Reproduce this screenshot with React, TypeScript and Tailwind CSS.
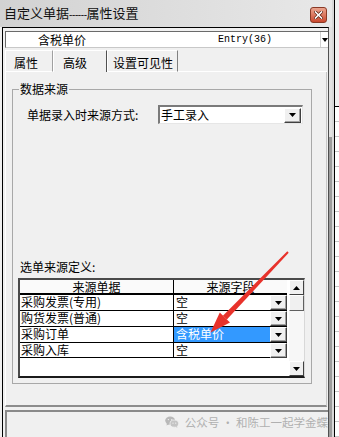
import React from "react";

const FONT = { fontFamily: '"Noto Sans CJK SC", "Noto Sans", sans-serif' };

function Tri({ w = 7, h = 4 }: { w?: number; h?: number }) {
  return (
    <svg width={w} height={h} viewBox={`0 0 ${w} ${h}`}>
      <polygon points={`0,0 ${w},0 ${w / 2},${h}`} fill="#000" />
    </svg>
  );
}

// raised button face, classic windows look
function DropBtn({ className = "" }: { className?: string }) {
  return (
    <div
      className={`flex items-center justify-center bg-[#f0f0f0] border border-t-white border-l-white border-r-[#404040] border-b-[#404040] shadow-[inset_-1px_-1px_0_#a0a0a0] ${className}`}
    >
      <Tri />
    </div>
  );
}

function UpTri() {
  return (
    <svg width="7" height="4" viewBox="0 0 7 4">
      <polygon points="0,4 7,4 3.5,0" fill="#000" />
    </svg>
  );
}

const rows = [
  { src: "采购发票(专用)", field: "空", h: "h-[16px]" },
  { src: "购货发票(普通)", field: "空", h: "h-[16px]" },
  { src: "采购订单", field: "含税单价", h: "h-[16px]", sel: true },
  { src: "采购入库", field: "空", h: "h-[15px]" },
];

function WeChat() {
  return (
    <svg width="14" height="12" viewBox="0 0 14 12">
      <ellipse cx="5.2" cy="4.6" rx="5" ry="4.2" fill="#b8b8b8" />
      <polygon points="2,7 1.5,9.5 4.5,8" fill="#b8b8b8" />
      <ellipse cx="9.3" cy="7.6" rx="4.3" ry="3.6" fill="#c4c4c4" stroke="#f0f0f0" strokeWidth="0.8" />
      <polygon points="11.5,10 12.6,11.8 10.2,10.8" fill="#c4c4c4" />
      <circle cx="3.4" cy="3.6" r="0.7" fill="#f0f0f0" />
      <circle cx="6.8" cy="3.6" r="0.7" fill="#f0f0f0" />
      <circle cx="8" cy="7.2" r="0.6" fill="#f0f0f0" />
      <circle cx="10.7" cy="7.2" r="0.6" fill="#f0f0f0" />
    </svg>
  );
}

export default function App() {
  return (
    <div className="relative w-[339px] h-[437px] overflow-hidden bg-[#f0f0f0] flex text-black" style={FONT}>
      {/* dialog */}
      <div className="w-[332px] flex flex-col">
        <div className="h-[27px] flex items-center justify-between pl-[4px] pr-[5px] bg-gradient-to-r from-[#d2d2d2] to-[#e8e8e8]">
          <span className="text-[13px] leading-[16px] text-[#111]">
            自定义单据
            <span className="text-[10px] tracking-[-0.4px]" style={{ fontFamily: '"Liberation Sans", sans-serif' }}>
              ------
            </span>
            属性设置
          </span>
          <div className="w-[17px] h-[16px] mt-[3px] rounded-[3px] border border-[#8a3a26] bg-gradient-to-b from-[#eba58f] to-[#c9472d] flex items-center justify-center">
            <svg width="9" height="8" viewBox="0 0 9 8">
              <path d="M1.5 1 L7.5 7 M7.5 1 L1.5 7" stroke="#5a2010" strokeWidth="3" strokeLinecap="square" />
              <path d="M1.5 1 L7.5 7 M7.5 1 L1.5 7" stroke="#fff" strokeWidth="1.6" strokeLinecap="square" />
            </svg>
          </div>
        </div>

        <div className="flex-1 flex">
          <div className="w-[2px]" />
          <div className="w-[327px] flex flex-col border-l border-t border-black border-r border-r-[#505050]">
            {/* field combo */}
            <div className="ml-[2px] mt-[3px] h-[17px] flex bg-white border-l border-t border-[#6a6a6a] border-b border-b-[#c8c8c8]">
              <span className="w-[212px] pl-[32px] text-[12px] leading-[15px]">含税单价</span>
              <span className="flex-1 text-[10px] leading-[15px]" style={{ fontFamily: '"Liberation Mono", monospace' }}>
                Entry(36)
              </span>
              <div className="w-[8px] flex items-center justify-center border-l border-[#d0d0d0]">
                <Tri w={6} h={4} />
              </div>
            </div>

            {/* tabs */}
            <div className="ml-[2px] mt-[2px] h-[22px] flex text-[12px]">
              <div className="w-[48px] h-[22px] pt-[3px] pl-[8px] leading-[17px] border-t border-l border-white border-r border-r-[#a0a0a0] border-b border-b-white">
                属性
              </div>
              <div className="w-[54px] h-[22px] pt-[3px] pl-[9px] leading-[18px] border-t border-l border-white border-r border-r-[#505050]">
                高级
              </div>
              <div className="w-[71px] h-[22px] pt-[3px] pl-[5px] leading-[17px] border-t border-l border-white border-r border-r-[#808080] border-b border-b-white">
                设置可见性
              </div>
              <div className="flex-1 border-b border-white mr-[1px]" />
            </div>

            {/* tab panel */}
            <div className="ml-[2px] mr-[1px] h-[335px] flex flex-col border-l border-white border-r border-r-[#c8c8c8] border-b-2 border-b-[#8c8c8c]">
              <fieldset className="mt-[11px] ml-[6px] w-[300px] border border-[#a8a8a8] px-0 pb-[5px] text-[12px]">
                <legend className="ml-[6px] px-[1px] leading-[12px]">数据来源</legend>
                <div className="mt-[10px] h-[19px] flex items-center">
                  <span className="ml-[14px] w-[131px] leading-[14px]">单据录入时来源方式:</span>
                  <div className="w-[145px] h-[19px] flex items-center bg-white border-l-2 border-t-2 border-[#7a7a7a] border-r border-b border-r-[#e6e6e6] border-b-[#e6e6e6]">
                    <span className="flex-1 pl-[1px] leading-[14px]">手工录入</span>
                    <DropBtn className="w-[17px] h-[15px] mr-px" />
                  </div>
                </div>

                <div className="mt-[136px] ml-[7px] leading-[14px]">选单来源定义:</div>

                {/* grid */}
                <div className="mt-[4px] ml-[5px] w-[287px] h-[100px] flex bg-white border-l-2 border-t-2 border-[#4a4a4a] border-b-2 border-b-[#1a1a1a] border-r border-r-[#d8d8d8]">
                  <div className="w-[267px] flex flex-col">
                    <div className="h-[15px] flex border-b-2 border-black bg-[#fafafa] leading-[13px]">
                      <div className="w-[154px] text-center border-r border-black">来源单据</div>
                      <div className="flex-1 text-center">来源字段</div>
                    </div>
                    {rows.map((r) => (
                      <div key={r.src} className={`${r.h} flex border-b border-black leading-[14px]`}>
                        <div className="w-[154px] pl-[1px] border-r border-black whitespace-nowrap">{r.src}</div>
                        <div className="flex-1 flex">
                          <div className={`flex-1 pl-[2px] ${r.sel ? "bg-[#3399ff] text-white" : ""}`}>{r.field}</div>
                          <DropBtn className="w-[17px] h-[15px]" />
                        </div>
                      </div>
                    ))}
                  </div>
                  <div className="ml-[2px] w-[15px] flex flex-col">
                    <div className="h-[15px] flex items-center justify-center bg-[#f0f0f0] border border-t-white border-l-white border-r-[#404040] border-b-[#404040]">
                      <UpTri />
                    </div>
                    <div className="h-[16px] bg-[#f0f0f0] border border-t-white border-l-white border-r-[#606060] border-b-[#606060]" />
                    <div className="flex-1 bg-[#f7f7f7]" />
                    <div className="h-[15px] flex items-center justify-center bg-[#f0f0f0] border border-t-white border-l-white border-r-[#404040] border-b-[#404040]">
                      <Tri />
                    </div>
                  </div>
                </div>
              </fieldset>
            </div>

            {/* status area */}
            <div className="mt-[3px] ml-[2px] flex-1 border-t-2 border-l-2 border-[#8a8a8a] flex justify-end items-start pt-[3px]">
              <div className="flex items-center gap-[6px] text-[11.5px] leading-[14px] text-[#b0b0b0] whitespace-nowrap">
                <WeChat />
                <span>公众号 · 和陈工一起学金蝶</span>
              </div>
            </div>
          </div>
          <div className="w-[3px] flex flex-col">
            <div className="h-[110px] bg-[#e2e2e2]" />
            <div className="flex-1 bg-[#9c9c9c]" />
          </div>
        </div>
      </div>

      {/* window behind the dialog */}
      <div className="w-[7px] flex">
        <div className="w-[2px] bg-[#d8d8d8]" />
        <div className="w-px bg-black" />
        <div className="flex-1 flex flex-col">
          <div className="h-[109px] bg-[#f0f0f0] border-b border-black" />
          <div className="flex-1 bg-white flex flex-col">
            {Array.from({ length: 22 }).map((_, i) => (
              <div key={i} className="h-[15px] shrink-0 border-b border-[#c8c8c8]" />
            ))}
          </div>
        </div>
      </div>

      {/* red annotation arrow */}
      <svg className="absolute left-0 top-0 pointer-events-none" width="339" height="437" viewBox="0 0 339 437">
        <polygon points="288.7,252.7 287.3,251.3 222.9,315.7 226.9,319.5" fill="#e8322b" />
        <polygon points="230,322.6 219.8,312.6 210.5,332.5" fill="#e8322b" />
      </svg>
    </div>
  );
}
